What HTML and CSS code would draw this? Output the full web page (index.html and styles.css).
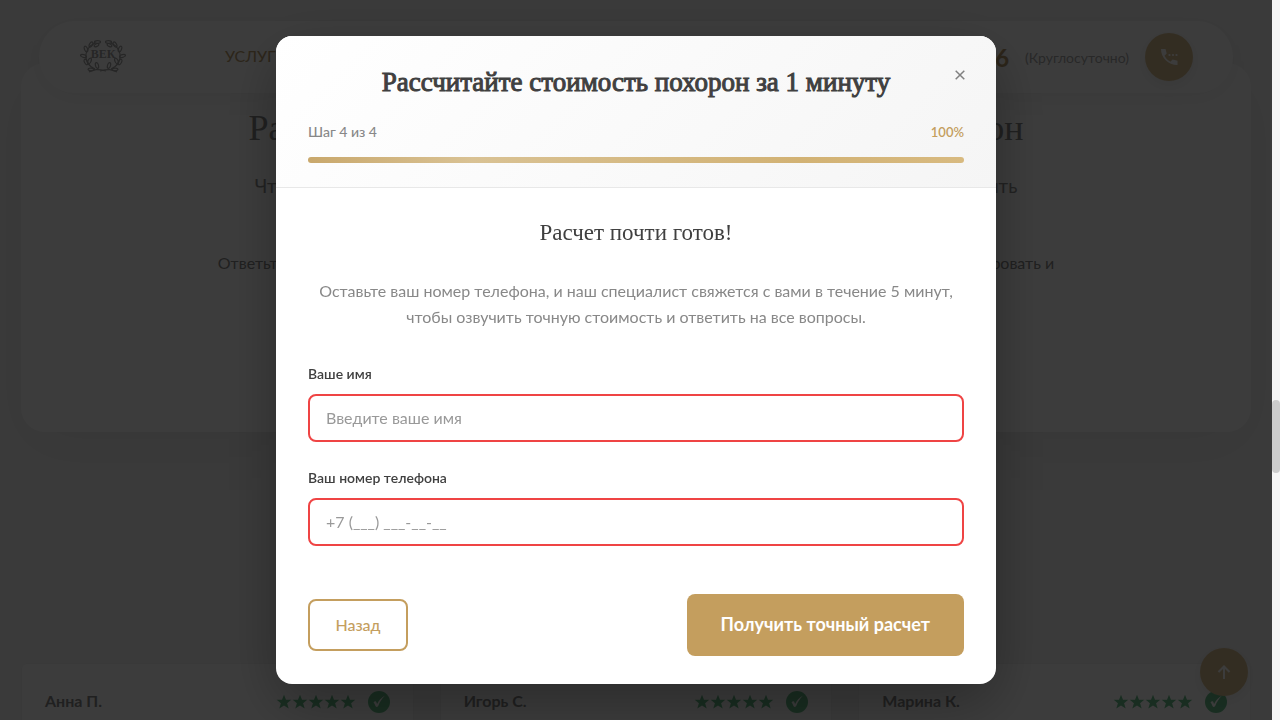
FILE: index.html
```html
<!DOCTYPE html>
<html lang="ru">
<head>
<meta charset="utf-8">
<meta name="viewport" content="width=device-width, initial-scale=1">
<title>Рассчитайте стоимость похорон</title>
<link rel="stylesheet" href="styles.css">
</head>
<body>
<svg class="defs" width="0" height="0" aria-hidden="true">
  <symbol id="star" viewBox="0 0 16 16"><path d="M8 .8l2 5h5.3l-4.2 3.4 1.6 5.3L8 11.4l-4.7 3.1 1.6-5.3L.7 5.800H6z"/></symbol>
  <symbol id="check" viewBox="0 0 22 22"><circle cx="11" cy="11" r="11"/><path class="tick" d="M5.500 11.500c.8-1.200 2-1.600 2.700-.8l.9 2.200C11 9 13.500 6.500 16.800 4.800c-2.800 3-5 6.200-6.600 10.200-.7 1.300-2 1.500-2.600.3-.6-1.400-1-2.800-2.100-3.800z"/></symbol>
</svg>
<div class="page">
  <header class="topbar">
    <a class="logo" href="#" aria-label="ВЕК">
      <svg width="46" height="34" viewBox="0 0 46 34" fill="none" stroke="currentColor" stroke-width="1.200">
        <text x="23" y="18" text-anchor="middle" class="logo-text">ВЕК</text>
        <g id="wreath">
          <path d="M15 3C11 5 7 8 6 14s2 12 9 15M9 32c5-3 9-3 17-1"/>
          <ellipse cx="17.500" cy="2" rx="3" ry="1.300"/><ellipse cx="16.500" cy="5.200" rx="2.500" ry="1.300" transform="rotate(-25 16.500 5.200)"/>
          <ellipse cx="11" cy="4.500" rx="2.800" ry="1.500" transform="rotate(-60 11 4.500)"/>
          <ellipse cx="6" cy="9" rx="3" ry="1.500" transform="rotate(65 6 9)"/>
          <ellipse cx="3.500" cy="16" rx="3" ry="1.400" transform="rotate(15 3.500 16)"/>
          <ellipse cx="9.500" cy="21" rx="3" ry="1.500" transform="rotate(-65 9.500 21)"/>
          <ellipse cx="6" cy="22" rx="3" ry="1.500" transform="rotate(60 6 22)"/>
          <ellipse cx="11" cy="29.500" rx="3" ry="1.300" transform="rotate(5 11 29.500)"/>
          <ellipse cx="17" cy="25.500" rx="3" ry="1.500" transform="rotate(75 17 25.500)"/>
        </g>
        <use href="#wreath" transform="translate(46 0) scale(-1 1)"/>
      </svg>
    </a>
    <nav><a href="#">УСЛУГИ</a></nav>
    <div class="contact">
      <a class="phone" href="#">6</a>
      <span class="hours">(Круглосуточно)</span>
      <a class="round" href="#" aria-label="Позвонить">
        <svg width="20" height="20" viewBox="0 0 20 20" fill="currentColor"><path d="M2 2h4.500l1.200 4.600-2.200 2.200c1.300 2.600 3.300 4.600 5.900 5.900l2.200-2.200 4.900 1.200V18C9.300 18 2 10.700 2 2z"/><circle cx="10.500" cy="8" r="1.100"/><circle cx="14" cy="8" r="1.100"/><circle cx="17.500" cy="8" r="1.100"/></svg>
      </a>
    </div>
  </header>
  <main>
    <section class="intro">
      <h1><span>Рассчитайте</span><span>похорон</span></h1>
      <p class="lead"><span>Чтобы</span><span>получить</span></p>
      <p class="note"><span>Ответьте</span><span>сформировать и</span></p>
    </section>
    <section class="reviews">
      <article><b>Анна П.</b><span class="rating"><span class="stars"><svg><use href="#star"/></svg><svg><use href="#star"/></svg><svg><use href="#star"/></svg><svg><use href="#star"/></svg><svg><use href="#star"/></svg></span><svg class="check"><use href="#check"/></svg></span></article>
      <article><b>Игорь С.</b><span class="rating"><span class="stars"><svg><use href="#star"/></svg><svg><use href="#star"/></svg><svg><use href="#star"/></svg><svg><use href="#star"/></svg><svg><use href="#star"/></svg></span><svg class="check"><use href="#check"/></svg></span></article>
      <article><b>Марина К.</b><span class="rating"><span class="stars"><svg><use href="#star"/></svg><svg><use href="#star"/></svg><svg><use href="#star"/></svg><svg><use href="#star"/></svg><svg><use href="#star"/></svg></span><svg class="check"><use href="#check"/></svg></span></article>
    </section>
  </main>
  <button class="round to-top" type="button" aria-label="Наверх">
    <svg width="16" height="16" viewBox="0 0 16 16" fill="none" stroke="currentColor" stroke-width="2"><path d="M8 15V3M2.500 8L8 2.500 13.500 8"/></svg>
  </button>
</div>

<div class="overlay">
  <div class="modal" role="dialog" aria-modal="true" aria-labelledby="quiz-title">
    <div class="modal-head">
      <button class="close" type="button" aria-label="Закрыть"><svg width="10" height="10" viewBox="0 0 10 10" fill="none" stroke="currentColor" stroke-width="1.500"><path d="M.7.7l8.600 8.600M9.300.7L.7 9.300"/></svg></button>
      <h2 id="quiz-title">Рассчитайте стоимость похорон за 1 минуту</h2>
      <div class="steps"><span>Шаг 4 из 4</span><span class="percent">100%</span></div>
      <div class="progress"></div>
    </div>
    <form class="modal-body">
      <h3>Расчет почти готов!</h3>
      <p class="hint">Оставьте ваш номер телефона, и наш специалист свяжется с вами в течение 5 минут, чтобы озвучить точную стоимость и ответить на все вопросы.</p>
      <div class="fields">
        <div class="field"><label for="name">Ваше имя</label><input id="name" type="text" placeholder="Введите ваше имя"></div>
        <div class="field"><label for="tel">Ваш номер телефона</label><input id="tel" type="tel" placeholder="+7 (___) ___-__-__"></div>
      </div>
      <div class="actions">
        <button class="back" type="button">Назад</button>
        <button class="submit" type="submit">Получить точный расчет</button>
      </div>
    </form>
  </div>
</div>
<div class="scrollbar" aria-hidden="true"><div class="thumb"></div></div>
</body>
</html>
```

FILE: styles.css
```css
* { box-sizing: border-box; }
html, body { height: 100%; }
body {
  margin: 0;
  overflow: hidden;
  background: #e8e8e8;
  color: #404040;
  font-family: Lato, "Open Sans", sans-serif;
  font-size: 16px;
}
h1, h2, h3, p { margin: 0; font-weight: 400; }
h1, h2, h3 { font-family: "Liberation Serif", serif; }
a { color: inherit; text-decoration: none; }
button, input { font: inherit; }
svg { display: block; }
.defs { position: absolute; }

.page { height: 100%; margin-right: 8px; padding: 21px; overflow: hidden; color: #888; }
.topbar {
  position: relative;
  z-index: 1;
  display: flex;
  align-items: center;
  height: 72px;
  margin: 0 18px;
  padding: 0 40px 0 41px;
  border-radius: 36px;
  background: #f0f0f0;
  box-shadow: 0 4px 24px rgba(0, 0, 0, .06);
}
.logo { color: #989898; }
.logo-text { font: 700 12px "Liberation Serif", serif; fill: currentColor; stroke: none; }
.topbar nav { margin-left: 99px; padding-bottom: 3px; color: #b09468; }
.contact { display: flex; align-items: center; gap: 16px; margin-left: auto; }
.phone { color: #b09468; font-size: 24px; font-weight: 700; }
.hours { color: #a0a0a0; font-size: 14px; }
.round {
  display: flex;
  align-items: center;
  justify-content: center;
  width: 48px;
  height: 48px;
  padding: 0;
  border: 0;
  border-radius: 50%;
  background: #ccb488;
  color: #f0f0f0;
  box-shadow: 0 4px 16px rgba(0, 0, 0, .08);
}
.intro {
  display: flex;
  flex-direction: column;
  align-items: center;
  height: 369px;
  margin-top: -30px;
  padding-top: 43px;
  border-radius: 24px;
  background: #f0f0f0;
  box-shadow: 0 16px 60px rgba(0, 0, 0, .05);
}
.intro > * { display: flex; justify-content: space-between; }
.intro h1 { width: 63%; font-size: 36px; line-height: 44px; color: #808080; }
.lead { width: 62%; margin-top: 22px; font-size: 19px; line-height: 28px; }
.note { width: 68%; margin-top: 52px; line-height: 22px; color: #808080; }
.reviews { display: grid; grid-template-columns: repeat(3, 1fr); gap: 26px; margin-top: 231px; }
.reviews article {
  display: flex;
  align-items: center;
  justify-content: space-between;
  padding: 27px 23px 48px;
  border: 1px solid #e4e4e4;
  border-radius: 6px;
  background: #f0f0f0;
  color: #808080;
}
.reviews b { line-height: 20px; padding-bottom: 2px; }
.rating { display: flex; align-items: center; gap: 12px; fill: #64b484; }
.stars { display: flex; }
.stars svg { width: 16px; height: 16px; }
.rating .check { width: 22px; height: 22px; }
.tick { fill: #f0f0f0; }
.to-top { position: fixed; right: 32px; bottom: 24px; z-index: 2; }

.overlay {
  position: fixed;
  inset: 0 8px 0 0;
  z-index: 10;
  display: flex;
  align-items: center;
  justify-content: center;
  background: rgba(0, 0, 0, .75);
}
.modal {
  width: 100%;
  max-width: 720px;
  border-radius: 16px;
  background: #fff;
  box-shadow: 0 20px 60px rgba(0, 0, 0, .3);
  overflow: hidden;
}
.modal-head {
  position: relative;
  padding: 28px 32px 24px;
  border-bottom: 1px solid #e8e8e8;
  background: linear-gradient(135deg, #fff, #f5f5f5);
}
.modal-head h2 { font-size: 27px; line-height: 36px; text-align: center; -webkit-text-stroke: 1px currentColor; }
.close {
  position: absolute;
  top: 23px;
  right: 20px;
  display: grid;
  place-items: center;
  width: 32px;
  height: 32px;
  padding: 0;
  border: 0;
  background: none;
  color: #808080;
}
.steps { display: flex; justify-content: space-between; margin-top: 22px; font-size: 14px; line-height: 20px; font-weight: 500; color: #888; }
.percent { color: #c49e5e; font-size: 13px; font-weight: 600; }
.progress { height: 6px; margin-top: 15px; border-radius: 3px; background: linear-gradient(90deg, #c9a86c, #d9c294 25%, #d2b274 75%, #d8ba80); }
.modal-body { padding: 32px 32px 28px; }
.modal-body h3 { font-size: 23px; line-height: 26px; text-align: center; }
.hint { margin: 32px 0 34px; line-height: 26px; text-align: center; color: #888; }
.fields { display: grid; gap: 26px; }
.field { display: grid; gap: 10px; }
.field label { font-size: 14px; line-height: 20px; font-weight: 600; }
.field input {
  width: 100%;
  height: 48px;
  padding: 0 16px 2px;
  border: 2px solid #ef4444;
  border-radius: 8px;
  outline: 0;
  background: #fff;
  color: #404040;
}
.field input::placeholder { color: #999; opacity: 1; }
.actions { display: flex; align-items: center; justify-content: space-between; margin-top: 48px; }
.actions button { border-radius: 8px; white-space: nowrap; }
.back { min-width: 100px; height: 52px; padding: 0 24px 2px; border: 2px solid #c49e5e; background: #fff; color: #c49e5e; font-weight: 500; }
.submit { height: 62px; padding: 0 34px 2px; border: 0; background: #c49e5e; color: #fff; font-size: 18px; font-weight: 700; }

.scrollbar { position: fixed; inset: 0 0 0 auto; width: 8px; background: #f5f5f5; }
.thumb { height: 73px; margin-top: 400px; border-radius: 4px; background: #ccc; }
```
